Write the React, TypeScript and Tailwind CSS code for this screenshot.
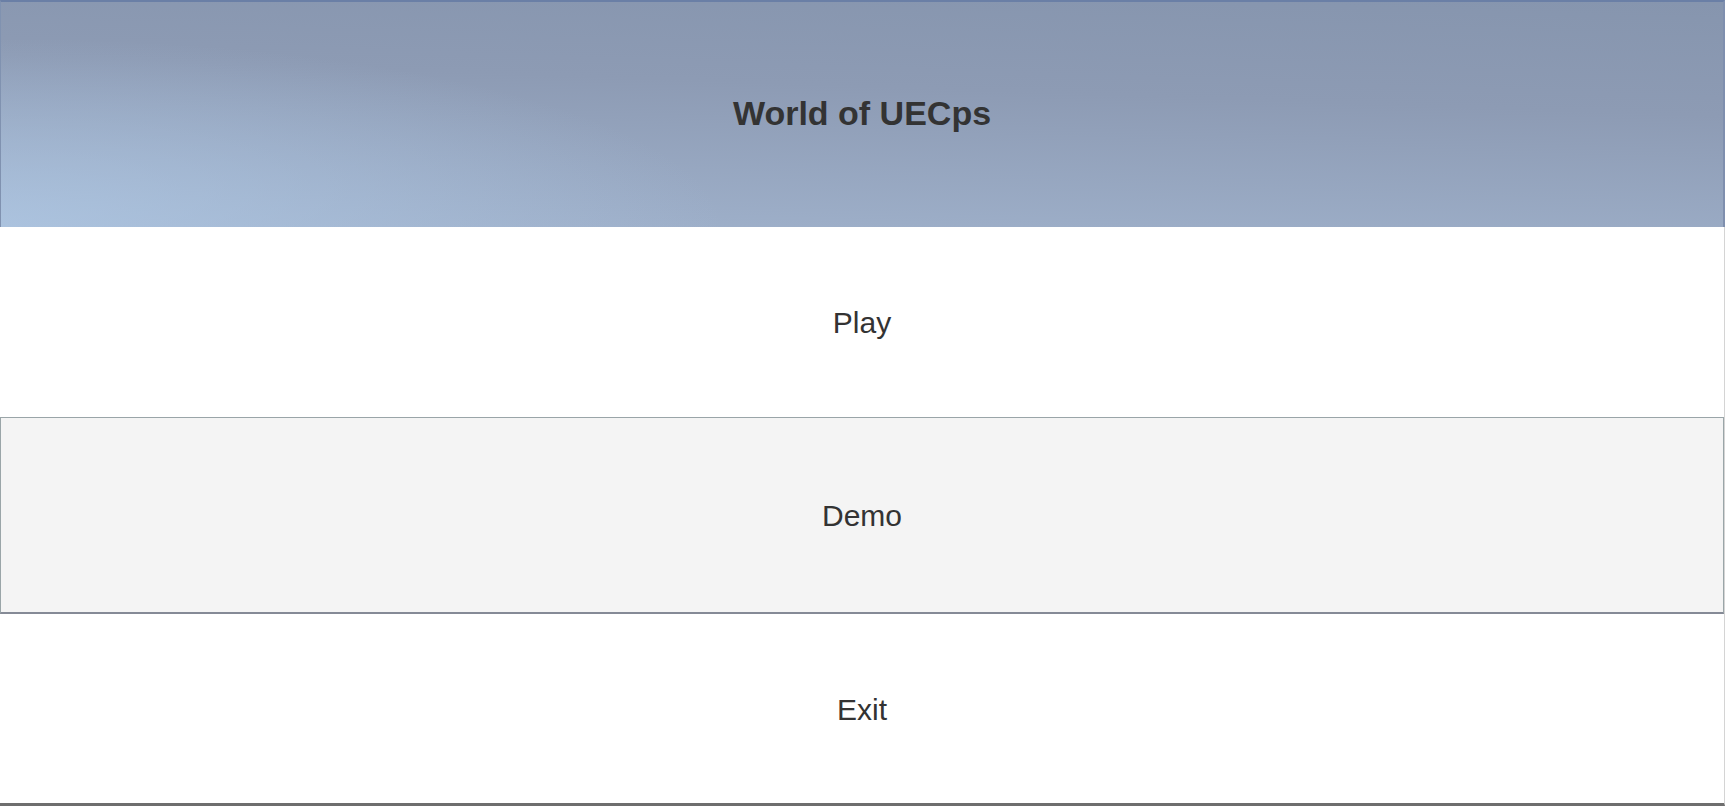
import React from "react";

export default function App() {
  const font = { fontFamily: '"Liberation Sans", Arial, sans-serif' };
  return (
    <div className="w-[1725px] h-[806px] flex flex-col bg-white overflow-hidden" style={font}>
      <div className="h-[227px] shrink-0 flex items-center justify-center pb-[4px] border-t-2 border-l border-r-2 border-t-[#6a7fa6] border-l-[#8092b0] border-r-[#7f8fae] bg-[radial-gradient(ellipse_60%_120%_at_0%_100%,rgba(175,200,228,0.75),rgba(175,200,228,0)_70%),linear-gradient(182deg,#8695ae_0%,#8d9bb4_40%,#a0b2cc_100%)]">
        <h1 className="text-[34px] font-bold text-[#333333] leading-none">World of UECps</h1>
      </div>
      <div className="flex-1 flex flex-col border-r border-r-[#d4d4d4] border-b-[3px] border-b-[#6e6e6e]">
        <div className="h-[190px] shrink-0 flex items-center justify-center pt-[2px]">
          <span className="text-[30px] text-[#333333] leading-none">Play</span>
        </div>
        <div className="h-[197px] shrink-0 flex items-center justify-center pt-[2px] bg-[#f4f4f4] border border-[#9aa5a8] border-b-2 border-b-[#858a96]">
          <span className="text-[30px] text-[#333333] leading-none">Demo</span>
        </div>
        <div className="flex-1 flex items-center justify-center pt-[2px]">
          <span className="text-[30px] text-[#333333] leading-none">Exit</span>
        </div>
      </div>
    </div>
  );
}
